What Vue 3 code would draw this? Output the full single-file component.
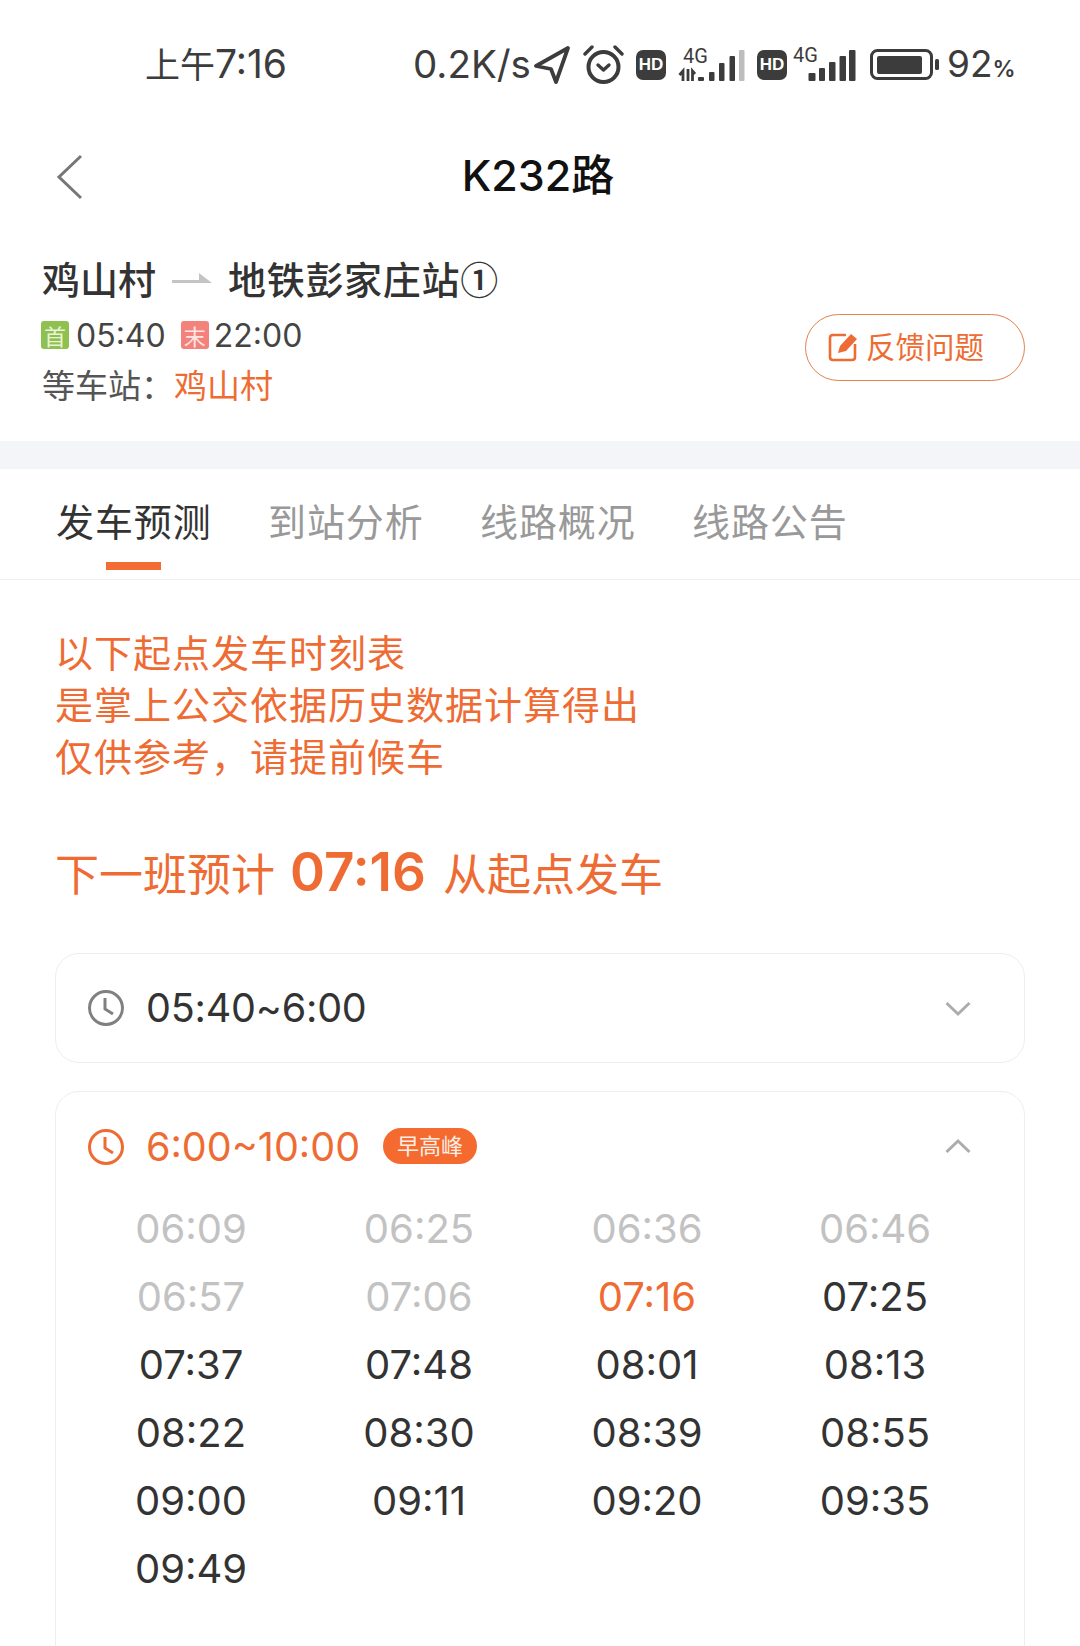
<script setup>
const tabs = ['发车预测', '到站分析', '线路概况', '线路公告']

// state: 0 已过, 1 下一班, 2 未发
const times = [
  ['06:09', 0], ['06:25', 0], ['06:36', 0], ['06:46', 0],
  ['06:57', 0], ['07:06', 0], ['07:16', 1], ['07:25', 2],
  ['07:37', 2], ['07:48', 2], ['08:01', 2], ['08:13', 2],
  ['08:22', 2], ['08:30', 2], ['08:39', 2], ['08:55', 2],
  ['09:00', 2], ['09:11', 2], ['09:20', 2], ['09:35', 2],
  ['09:49', 2]
]
const timeClass = ['past', 'next', '']
</script>

<template>
  <div class="page">
    <div class="status">
      <span class="clock"><small>上午</small>7:16</span>
      <span class="speed">0.2K/s</span>
      <svg class="ic-nav" width="38" height="40" viewBox="0 0 38 40">
        <path d="M35 3 L3 21 L18 24 L23 37 Z" fill="none" stroke="#3c3c3c" stroke-width="3.8" stroke-linejoin="round" />
      </svg>
      <svg class="ic-alarm" width="41" height="40" viewBox="0 0 41 40">
        <circle cx="20.500" cy="22" r="15" fill="none" stroke="#3c3c3c" stroke-width="4" />
        <path d="M15 20 L20.500 25 L26 20" fill="none" stroke="#3c3c3c" stroke-width="3.4" stroke-linecap="round" stroke-linejoin="round" />
        <path d="M2 9 L9 2 M39 9 L32 2" stroke="#3c3c3c" stroke-width="3.4" stroke-linecap="round" />
      </svg>
      <span class="hd">HD</span>
      <svg class="ic-sig" width="67" height="46" viewBox="0 0 67 46">
        <text x="5" y="21" class="sig-text">4G</text>
        <path d="M1.500 33 L5 29 L5 39 M10 27 L10 39 M14.500 39 L14.500 29 L17 32" fill="none" stroke="#3c3c3c" stroke-width="2.800" />
        <rect x="20" y="35" width="6" height="4" rx="1" fill="#3c3c3c" />
        <rect x="31" y="30" width="5.500" height="9" rx="1" fill="#3c3c3c" />
        <rect x="41" y="21" width="5.500" height="18" rx="1" fill="#3c3c3c" />
        <rect x="51.500" y="14" width="5.500" height="25" rx="1" fill="#3c3c3c" />
        <rect x="61" y="8" width="5.500" height="31" rx="1" fill="#bdbdbd" />
      </svg>
      <span class="hd">HD</span>
      <svg class="ic-sig2" width="63" height="46" viewBox="0 0 63 46">
        <text x="0" y="20" class="sig-text">4G</text>
        <rect x="15.500" y="31" width="7" height="8" rx="1" fill="#3c3c3c" />
        <rect x="26" y="26" width="6" height="13" rx="1" fill="#3c3c3c" />
        <rect x="36" y="20" width="6.500" height="19" rx="1" fill="#3c3c3c" />
        <rect x="46.500" y="14" width="6.500" height="25" rx="1" fill="#3c3c3c" />
        <rect x="56" y="8" width="6.500" height="31" rx="1" fill="#3c3c3c" />
      </svg>
      <svg class="ic-bat" width="70" height="32" viewBox="0 0 70 32">
        <rect x="1.500" y="1.500" width="60" height="28" rx="6" fill="none" stroke="#3c3c3c" stroke-width="3" />
        <rect x="7" y="7" width="45" height="18" rx="2" fill="#3c3c3c" />
        <rect x="65" y="10" width="4" height="11" rx="1.500" fill="#3c3c3c" />
      </svg>
      <span class="batt">92<small>%</small></span>
    </div>

    <div class="title-bar">
      <svg class="back" width="28" height="46" viewBox="0 0 28 46">
        <path d="M25 2 L3 23 L25 44" fill="none" stroke="#777" stroke-width="3" />
      </svg>
      <h1>K232路</h1>
    </div>

    <div class="route">
      <div class="route-info">
        <div class="route-name">
          <span>鸡山村</span>
          <svg width="40" height="16" viewBox="0 0 40 16">
            <path d="M0 11 H40 L27 1 V8 H0 Z" fill="#c4c4c4" />
          </svg>
          <span class="dest">地铁彭家庄站①</span>
        </div>
        <div class="route-time">
          <i class="tag first">首</i><span>05:40</span>
          <i class="tag last">末</i><span>22:00</span>
        </div>
        <div class="route-wait">等车站：<em>鸡山村</em></div>
      </div>
      <div class="feedback">
        <svg width="30" height="30" viewBox="0 0 30 30">
          <path d="M18 3 H5 Q2 3 2 6 V25 Q2 28 5 28 H24 Q27 28 27 25 V12" fill="none" stroke="#ee6c33" stroke-width="2.600" />
          <path d="M10 21 L12 14 L23 2 L29 7 L18 19 Z" fill="#ee6c33" />
        </svg>
        <span>反馈问题</span>
      </div>
    </div>

    <div class="gap"></div>

    <div class="tabs">
      <div v-for="(t, i) in tabs" :key="t" class="tab" :class="{ active: i === 0 }">{{ t }}</div>
    </div>

    <div class="content">
      <p class="notice">以下起点发车时刻表<br />是掌上公交依据历史数据计算得出<br />仅供参考，请提前候车</p>
      <div class="predict">下一班预计<b>07:16</b>从起点发车</div>

      <div class="card closed">
        <div class="card-head">
          <svg class="clock-ic" width="38" height="38" viewBox="0 0 38 38">
            <circle cx="19" cy="19" r="16.500" fill="none" stroke="#808080" stroke-width="3" />
            <path d="M18 9 V20 L26 25" fill="none" stroke="#808080" stroke-width="3" />
          </svg>
          <span class="range">05:40~6:00</span>
          <svg class="chev" width="26" height="16" viewBox="0 0 26 16">
            <path d="M1.500 2 L13 13 L24.500 2" fill="none" stroke="#acacac" stroke-width="3" />
          </svg>
        </div>
      </div>

      <div class="card open">
        <div class="card-head">
          <svg class="clock-ic" width="38" height="38" viewBox="0 0 38 38">
            <circle cx="19" cy="19" r="16.500" fill="none" stroke="#ee6c33" stroke-width="3" />
            <path d="M18 9 V20 L26 25" fill="none" stroke="#ee6c33" stroke-width="3" />
          </svg>
          <span class="range on">6:00~10:00</span>
          <span class="peak">早高峰</span>
          <svg class="chev" width="26" height="16" viewBox="0 0 26 16">
            <path d="M1.500 14 L13 3 L24.500 14" fill="none" stroke="#acacac" stroke-width="3" />
          </svg>
        </div>
        <div class="grid">
          <div v-for="t in times" :key="t[0]" class="time" :class="timeClass[t[1]]">{{ t[0] }}</div>
        </div>
      </div>
    </div>
  </div>
</template>

<style>
html, body {
  margin: 0;
  background: #fff;
}
</style>

<style scoped>
.page {
  width: 1080px;
  height: 1646px;
  overflow: hidden;
  background: #fff;
  color: #333;
  font-family: Inter, "Noto Sans CJK SC", sans-serif;
}

.status {
  height: 130px;
  display: flex;
  align-items: center;
  box-sizing: border-box;
  padding: 0 0 0 145px;
  color: #3c3c3c;
  font-size: 37px;
}
.clock {
  width: 268px;
  flex: none;
  margin-bottom: 6px;
  font-size: 39px;
  white-space: nowrap;
}
.clock small {
  font-size: 35px;
}
.speed {
  width: 120px;
  flex: none;
  margin-bottom: 3px;
  font-size: 38.500px;
  white-space: nowrap;
}
.ic-nav { flex: none; }
.ic-alarm { margin-left: 12px; flex: none; }
.hd {
  flex: none;
  width: 30px;
  height: 30px;
  margin-left: 12px;
  border-radius: 7px;
  background: #3c3c3c;
  color: #fff;
  font: 700 17px/30px "Liberation Sans", sans-serif;
  text-align: center;
}
.ic-sig { margin-left: 12px; flex: none; }
.ic-sig2 { margin-left: 6px; flex: none; }
.ic-bat { margin-left: 14px; flex: none; }
.sig-text {
  font-family: Roboto, sans-serif;
  font-size: 20px;
  fill: #3c3c3c;
}
.batt {
  margin-left: 7px;
  margin-bottom: 3px;
  flex: none;
}
.batt small {
  font-size: 23px;
  font-weight: 600;
}

.title-bar {
  height: 90px;
  position: relative;
  display: flex;
  align-items: center;
  justify-content: center;
}
.title-bar h1 {
  margin: 0 4px 6px 0;
  font-size: 43px;
  font-weight: 500;
  color: #111;
}
.back {
  position: absolute;
  left: 56px;
  top: 24px;
}

.route {
  height: 221px;
  box-sizing: border-box;
  padding: 31px 55px 0 42px;
  display: flex;
  justify-content: space-between;
}
.route-name {
  display: flex;
  align-items: center;
  height: 52px;
  font-size: 38px;
  font-weight: 500;
  color: #333;
}
.route-name svg {
  margin: 6px 16px 0;
}
.dest {
  font-family: "Noto Sans CJK SC", sans-serif;
  letter-spacing: 0.7px;
}
.route-time {
  display: flex;
  align-items: center;
  height: 52px;
  margin-top: 6px;
  font-size: 32px;
  color: #444;
}
.tag {
  width: 28px;
  height: 28px;
  margin-right: 7px;
  border-radius: 3px;
  color: #e8f3d8;
  font: normal 22px/28px "Noto Sans CJK SC", sans-serif;
  text-align: center;
}
.tag.first {
  background: #90c050;
  margin-left: -1px;
}
.tag.last {
  background: #f4827c;
  margin-left: 15px;
  margin-right: 5px;
  color: #fde6e4;
}
.route-wait {
  height: 50px;
  line-height: 50px;
  font-size: 33px;
  color: #555;
}
.route-wait em {
  font-style: normal;
  color: #ee6c33;
}
.feedback {
  width: 220px;
  height: 67px;
  margin-top: 63px;
  box-sizing: border-box;
  display: flex;
  align-items: center;
  padding-left: 22px;
  gap: 8px;
  border: 1px solid #e2824f;
  border-radius: 34px;
  color: #ee6c33;
  font-size: 29.500px;
}
.feedback svg {
  margin-bottom: 2px;
}
.feedback span {
  margin-bottom: 5px;
}

.gap {
  height: 28px;
  background: #f4f5f9;
}

.tabs {
  height: 111px;
  box-sizing: border-box;
  display: flex;
  gap: 58px;
  padding-left: 56px;
  border-bottom: 1px solid #eee;
}
.tab {
  position: relative;
  width: 154px;
  height: 110px;
  line-height: 106px;
  font-size: 38px;
  letter-spacing: 0.9px;
  color: #999;
  white-space: nowrap;
}
.tab.active {
  color: #333;
}
.tab.active::after {
  content: "";
  position: absolute;
  left: 50px;
  bottom: 9px;
  width: 55px;
  height: 8px;
  background: #f36c33;
}

.content {
  padding: 0 55px;
}
.notice {
  margin: 47px 0 0;
  font-size: 38px;
  line-height: 52px;
  letter-spacing: 1px;
  color: #ee6c33;
}
.predict {
  display: flex;
  align-items: center;
  height: 70px;
  margin: 54px 0 0;
  font-size: 44px;
  color: #ee6c33;
  white-space: nowrap;
}
.predict b {
  margin: 0 17px 0 15px;
  font-size: 53px;
  font-weight: 600;
}

.card {
  box-sizing: border-box;
  border: 1px solid #eee;
  border-radius: 24px;
}
.card.closed {
  height: 110px;
  margin-top: 46px;
}
.card.open {
  height: 600px;
  margin-top: 28px;
}
.card-head {
  display: flex;
  align-items: center;
  height: 107px;
  padding: 0 53px 0 31px;
}
.open .card-head {
  height: 110px;
}
.range {
  margin-left: 21px;
  font-size: 39.500px;
  letter-spacing: -0.2px;
  color: #333;
}
.range.on {
  letter-spacing: 0;
  margin-bottom: 1px;
  color: #ee6c33;
}
.peak {
  margin-left: 23px;
  margin-bottom: 2px;
  width: 94px;
  height: 36px;
  border-radius: 18px;
  background: #f56a2e;
  color: #fdeee6;
  font-size: 22px;
  line-height: 36px;
  text-align: center;
}
.chev {
  margin-left: auto;
  margin-top: 2px;
}
.open .chev {
  margin-top: 0;
  margin-bottom: 2px;
}

.grid {
  display: grid;
  grid-template-columns: repeat(4, 228px);
  grid-auto-rows: 68px;
  padding: 0 0 0 21px;
  margin-top: -7px;
}
.time {
  text-align: center;
  font-size: 40px;
  line-height: 68px;
  color: #333;
}
.time.past {
  color: #c2c2c2;
}
.time.next {
  color: #ee6c33;
}
</style>
